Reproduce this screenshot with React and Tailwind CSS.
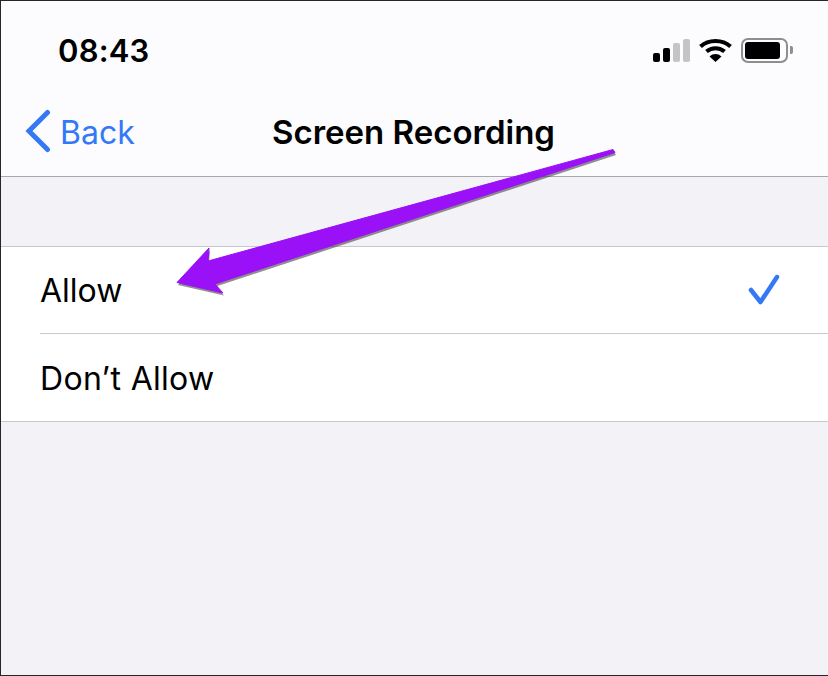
const arrowPoints = "613,149.5 615,152.5 215,284 223,293 177,282.5 209,248 208,261";

function SignalBars() {
  return (
    <div className="flex items-end gap-[3px]">
      <span className="h-[9px] w-[7px] rounded-[2px] bg-black" />
      <span className="h-[14px] w-[7px] rounded-[2px] bg-black" />
      <span className="h-[19px] w-[7px] rounded-[2px] bg-[#c4c4c6]" />
      <span className="h-[23px] w-[7px] rounded-[2px] bg-[#c4c4c6]" />
    </div>
  );
}

function WifiIcon() {
  return (
    <svg width="33" height="24" viewBox="0 0 33 24" fill="none">
      <path d="M1.5 8.5C9.5 1 23.5 1 31.5 8.5" stroke="#000" strokeWidth="4" strokeLinecap="butt" />
      <path d="M7.5 13.5C12.5 9 20.5 9 25.5 13.5" stroke="#000" strokeWidth="4" strokeLinecap="butt" />
      <path d="M10.5 18.5C14 15.2 19 15.2 22.5 18.5L16.5 24Z" fill="#000" />
    </svg>
  );
}

function BatteryIcon() {
  return (
    <div className="flex items-center gap-[2px]">
      <div className="flex h-[25px] w-[47px] items-center rounded-[7px] border-2 border-[#8e8e90] p-[2px]">
        <div className="h-full w-[35px] rounded-[3px] bg-black" />
      </div>
      <span className="h-[8px] w-[3px] rounded-r-[2px] bg-[#8e8e90]" />
    </div>
  );
}

export default function App() {
  return (
    <main className="relative flex h-[676px] w-[828px] flex-col border-y border-l border-[#26262a] bg-[#f2f2f7] font-['Inter','Liberation_Sans',sans-serif] text-black">
      <header className="h-[176px] border-b border-[#a9a9ac] bg-[#fcfcfe]">
        <div className="flex h-[100px] items-center justify-between pl-[57px] pr-[35px] pb-[2px]">
          <span className="text-[31px] font-semibold leading-none tracking-[0.2px]">08:43</span>
          <div className="flex items-center gap-[9px]">
            <SignalBars />
            <WifiIcon />
            <BatteryIcon />
          </div>
        </div>
        <div className="relative flex h-[64px] items-center justify-center">
          <div className="absolute left-[24px] top-[8px] flex items-center gap-[9px] text-[#3478f6]">
            <svg width="26" height="44" viewBox="0 0 26 44" fill="none">
              <path d="M22.5 3.5 L4 22 L22.5 40.5" stroke="#3478f6" strokeWidth="5" strokeLinecap="round" strokeLinejoin="miter" />
            </svg>
            <span className="pt-[3px] text-[32px] leading-none">Back</span>
          </div>
          <h1 className="pb-[2px] pr-[2px] text-[33px] font-semibold leading-none">Screen Recording</h1>
        </div>
      </header>

      <section className="mt-[69px] border-y border-[#c9c9cc] bg-white">
        <div className="flex h-[86px] items-center justify-between pl-[39px] pr-[46px] pt-[2px]">
          <span className="text-[32px] leading-none">Allow</span>
          <svg width="34" height="34" viewBox="0 0 34 34" fill="none">
            <path d="M3 16 L12.5 28 L29 3" stroke="#3478f6" strokeWidth="4.5" strokeLinecap="round" strokeLinejoin="round" />
          </svg>
        </div>
        <div className="ml-[39px] border-t border-[#c9c9cc]" />
        <div className="flex h-[87px] items-center pl-[39px] pt-[2px]">
          <span className="text-[32px] leading-none tracking-[0.3px]">Don’t Allow</span>
        </div>
      </section>

      {/* purple annotation arrow, coords are page pixels */}
      <svg className="absolute -left-px -top-px" width="828" height="676" viewBox="0 0 828 676">
        <polygon points={arrowPoints} fill="#444" opacity="0.6" transform="translate(1 2.5)" />
        <polygon points={arrowPoints} fill="#9a10f7" stroke="#9a10f7" strokeWidth="1" strokeLinejoin="round" />
      </svg>
    </main>
  );
}
